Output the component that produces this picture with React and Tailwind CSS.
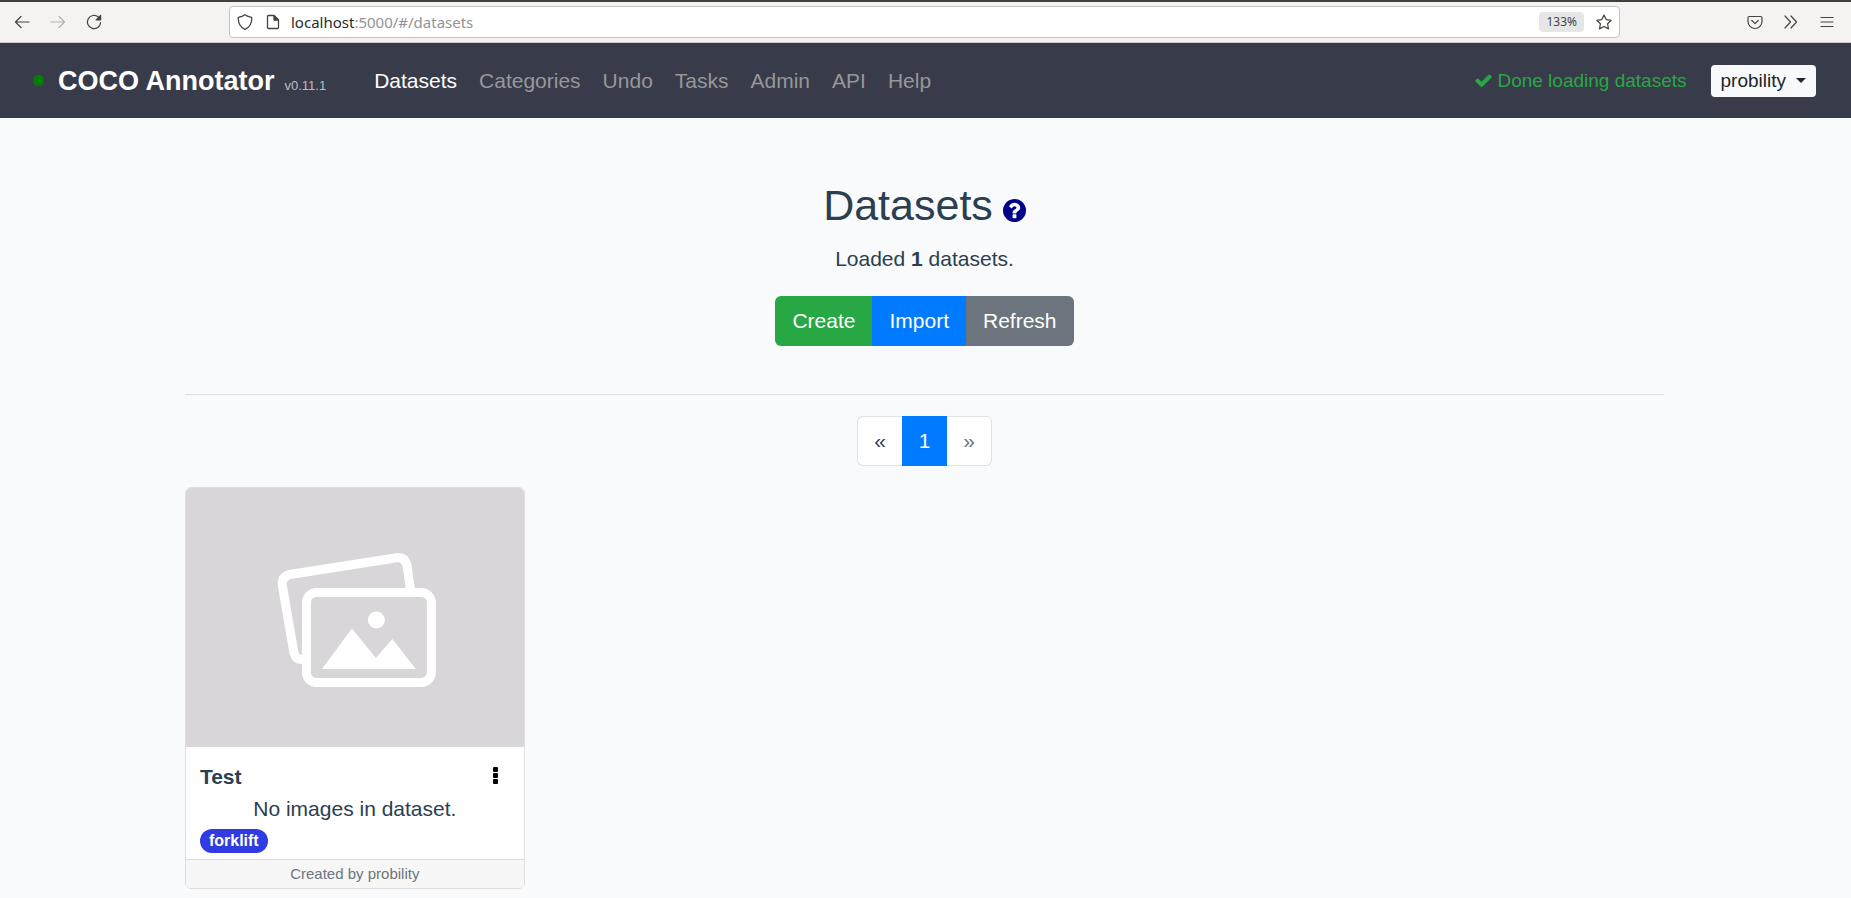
const NAV = ["Categories", "Undo", "Tasks", "Admin", "API", "Help"];

function ChromeButton({ label, muted, children }) {
  return (
    <button aria-label={label} className={muted ? "text-[#b3b2b0]" : "text-[#45443f]"}>
      <svg viewBox="0 0 16 16" className="size-4" fill="none" stroke="currentColor" strokeWidth="1.2" strokeLinecap="round" strokeLinejoin="round">
        {children}
      </svg>
    </button>
  );
}

function BrowserBar() {
  return (
    <div className="flex h-[43px] items-center border-t-2 border-b border-t-[#403f38] border-b-[#cccac8] bg-[#f4f3f1]">
      <div className="flex w-[229px] shrink-0 items-center gap-5 pl-3.5">
        <ChromeButton label="Back">
          <path d="M15 8H1.500M7 2.500L1.500 8L7 13.500" />
        </ChromeButton>
        <ChromeButton label="Forward" muted>
          <path d="M1 8H14.500M9 2.500L14.500 8L9 13.500" />
        </ChromeButton>
        <ChromeButton label="Reload">
          <path d="M14.600 8.500A6.600 6.600 0 1 1 12.300 3" />
          <path d="M14.600 1.500V6H10.200Z" fill="currentColor" />
        </ChromeButton>
      </div>
      <div className="flex h-8 min-w-0 flex-1 items-center rounded border border-[#c6c4c2] bg-white px-[7px] text-[#45443f]">
        <svg viewBox="0 0 16 16" className="size-4 shrink-0" fill="none" stroke="currentColor" strokeWidth="1.300" strokeLinejoin="round">
          <path d="M8 .8C6 2.300 3.500 3 1.300 3.300C1 8.500 3 13 8 15.300C13 13 15 8.500 14.700 3.300C12.500 3 10 2.300 8 .8Z" />
        </svg>
        <svg viewBox="0 0 16 16" className="ml-3 size-4 shrink-0" fill="none" stroke="currentColor" strokeWidth="1.300" strokeLinejoin="round">
          <path d="M3.500 1.500H9L13.500 6V13.500Q13.500 14.500 12.500 14.500H3.500Q2.500 14.500 2.500 13.500V2.500Q2.500 1.500 3.500 1.500Z" />
          <path d="M9 1.500V6H13.500Z" fill="currentColor" />
        </svg>
        <a href="#/datasets" className="ml-2.5 flex-1 truncate font-['Noto_Sans',sans-serif] text-[15px] text-[#939393]">
          <span className="text-[#2b2b2b]">localhost</span>:5000/#/datasets
        </a>
        <button className="h-5 rounded-sm bg-[#e6e6e6] px-[7px] font-['Noto_Sans',sans-serif] text-xs leading-5 text-[#45443f]">133%</button>
        <button aria-label="Bookmark this page" className="ml-3">
          <svg viewBox="0 0 16 16" className="size-4" fill="none" stroke="currentColor" strokeWidth="1.200" strokeLinejoin="round">
            <path d="M8 1L10.200 5.600L15.200 6.300L11.600 9.800L12.500 14.900L8 12.500L3.500 14.900L4.400 9.800L.8 6.300L5.800 5.600Z" />
          </svg>
        </button>
      </div>
      <div className="flex w-[231px] shrink-0 items-center justify-end gap-5 pr-4">
        <ChromeButton label="Save to Pocket">
          <path d="M2.500 2.500H13.500Q15 2.500 15 4V7.500A7 7 0 0 1 1 7.500V4Q1 2.500 2.500 2.500ZM4.800 6.500L8 9.600L11.200 6.500" />
        </ChromeButton>
        <ChromeButton label="More tools">
          <path d="M2 2L7.500 8L2 14M8 2L13.500 8L8 14" />
        </ChromeButton>
        <ChromeButton label="Menu">
          <path d="M2 3.500H14M2 8H14M2 12.500H14" />
        </ChromeButton>
      </div>
    </div>
  );
}

function AppNav() {
  return (
    <nav className="flex h-[75px] items-center bg-[#383c4a] pr-[35px] pl-[33px]">
      <span className="size-[11px] rounded-full bg-[#008000]" />
      <a href="#/" className="ml-3.5 flex items-baseline gap-2.5 text-white">
        <strong className="text-[27px] leading-8">COCO Annotator</strong>
        <span className="text-[13px] text-[#bcbdc2]">v0.11.1</span>
      </a>
      <div className="ml-12 flex gap-[22px] text-[21px] leading-8 text-[#969799]">
        <a href="#/datasets" className="text-white">Datasets</a>
        {NAV.map((item) => (
          <a key={item} href={"#/" + item.toLowerCase()}>{item}</a>
        ))}
      </div>
      <div className="ml-auto flex items-center text-[#28a745]">
        <svg viewBox="0 0 1792 1792" className="mr-1 size-[19px]" fill="currentColor">
          <path d="M1671 566q0 40-28 68l-724 724-136 136q-28 28-68 28t-68-28l-136-136-362-362q-28-28-28-68t28-68l136-136q28-28 68-28t68 28l294 295 656-657q28-28 68-28t68 28l136 136q28 28 28 68z" />
        </svg>
        <span className="text-[19px] leading-7">Done loading datasets</span>
      </div>
      <button className="ml-6 flex h-8 items-center gap-2.5 rounded bg-[#f8f9fa] px-2.5 text-[19px] leading-7 text-[#212529]">
        probility
        <svg viewBox="0 0 10 5" className="h-[5px] w-2.5" fill="currentColor">
          <path d="M0 0H10L5 5Z" />
        </svg>
      </button>
    </nav>
  );
}

function DatasetCard() {
  return (
    <article className="overflow-hidden rounded-md border border-[#dfdfdf] bg-white">
      <svg viewBox="0 0 338 259" className="block w-full bg-[#d8d6d9]" fill="none" stroke="#fff" strokeWidth="9">
        <path d="M224.500 101L221 77Q218.500 68 209 70L104 86.500Q95 89 96.500 98L108 165Q110 172 117 171.500" />
        <rect x="120.500" y="104.500" width="125" height="90" rx="10" />
        <circle cx="190.500" cy="132" r="8.500" fill="#fff" stroke="none" />
        <path d="M136 181L166 140.500L190 170L206.500 151L230 181Z" fill="#fff" stroke="none" />
      </svg>
      <div className="px-3.5 pt-3.5 pb-1.5">
        <div className="flex items-start justify-between">
          <strong className="text-[21px] leading-8">Test</strong>
          <button aria-label="Dataset options" className="mt-1.5 mr-3">
            <svg viewBox="0 0 5 18" className="h-[18px] w-[5px]" fill="#000">
              <rect width="5" height="5" y="0" rx="1" />
              <rect width="5" height="5" y="6" rx="1" />
              <rect width="5" height="5" y="12" rx="1" />
            </svg>
          </button>
        </div>
        <p className="text-center text-[21px] leading-8">No images in dataset.</p>
        <div className="mt-1 flex">
          <span className="h-6 rounded-full bg-[#2f3be3] px-[9px] text-base leading-6 font-bold text-white">forklift</span>
        </div>
      </div>
      <footer className="border-t border-[#d8d8d8] bg-[#f7f7f7] text-center text-[15px] leading-7 text-[#6c757d]">Created by probility</footer>
    </article>
  );
}

export default function App() {
  return (
    <div className="min-h-screen bg-[#f8fafc] font-['Liberation_Sans',Arial,sans-serif] text-[#2c3e50]">
      <BrowserBar />
      <AppNav />
      <div className="pt-[61px] pr-0.5">
        <main className="mx-auto w-4/5">
          <header className="flex flex-col items-center border-b border-[#dddfe2] pb-12">
            <h1 className="flex items-center gap-2.5 text-[43px] leading-[52px]">
              Datasets
              <button aria-label="Help" className="pt-2.5">
                <svg viewBox="128 128 1536 1536" className="size-[23px]" fill="#00008b">
                  <path d="M1024 1376v-192q0-14-9-23t-23-9h-192q-14 0-23 9t-9 23v192q0 14 9 23t23 9h192q14 0 23-9t9-23zm256-672q0-88-55.500-163t-138.500-116-170-41q-243 0-371 213-15 24 8 42l132 100q7 6 19 6 16 0 25-12 53-68 86-92 34-24 86-24 48 0 85.500 26t37.500 59q0 38-20 61t-68 45q-63 28-115.500 86.500t-52.500 125.500v36q0 14 9 23t23 9h192q14 0 23-9t9-23q0-19 21.500-49.500t54.500-49.500q32-18 49-28.500t46-35 44.500-48 28-60.500 12.500-81zm384 192q0 209-103 385.500t-279.500 279.500-385.500 103-385.500-103-279.500-279.500-103-385.500 103-385.500 279.500-279.500 385.500-103 385.500 103 279.500 279.500 103 385.500z" />
                </svg>
              </button>
            </h1>
            <p className="mt-3 text-[21px] leading-8">
              Loaded <strong>1</strong> datasets.
            </p>
            <div className="mt-[21px] flex overflow-hidden rounded-md text-[21px] leading-8 text-white">
              <button className="h-[50px] bg-[#28a745] px-[17px]">Create</button>
              <button className="h-[50px] bg-[#007bff] px-[17px]">Import</button>
              <button className="h-[50px] bg-[#6c757d] px-[17px]">Refresh</button>
            </div>
          </header>
          <div className="mt-[21px] flex justify-center text-[21px]">
            <button aria-label="Previous page" className="h-[50px] w-[45px] rounded-l-md border border-r-0 border-[#dee2e6] bg-white">«</button>
            <button aria-current="page" className="h-[50px] w-[45px] bg-[#007bff] text-white">1</button>
            <button aria-label="Next page" className="h-[50px] w-[45px] rounded-r-md border border-l-0 border-[#dee2e6] bg-white text-[#6c757d]">»</button>
          </div>
          <div className="mt-[21px] grid grid-cols-4 gap-10">
            <DatasetCard />
          </div>
        </main>
      </div>
    </div>
  );
}
